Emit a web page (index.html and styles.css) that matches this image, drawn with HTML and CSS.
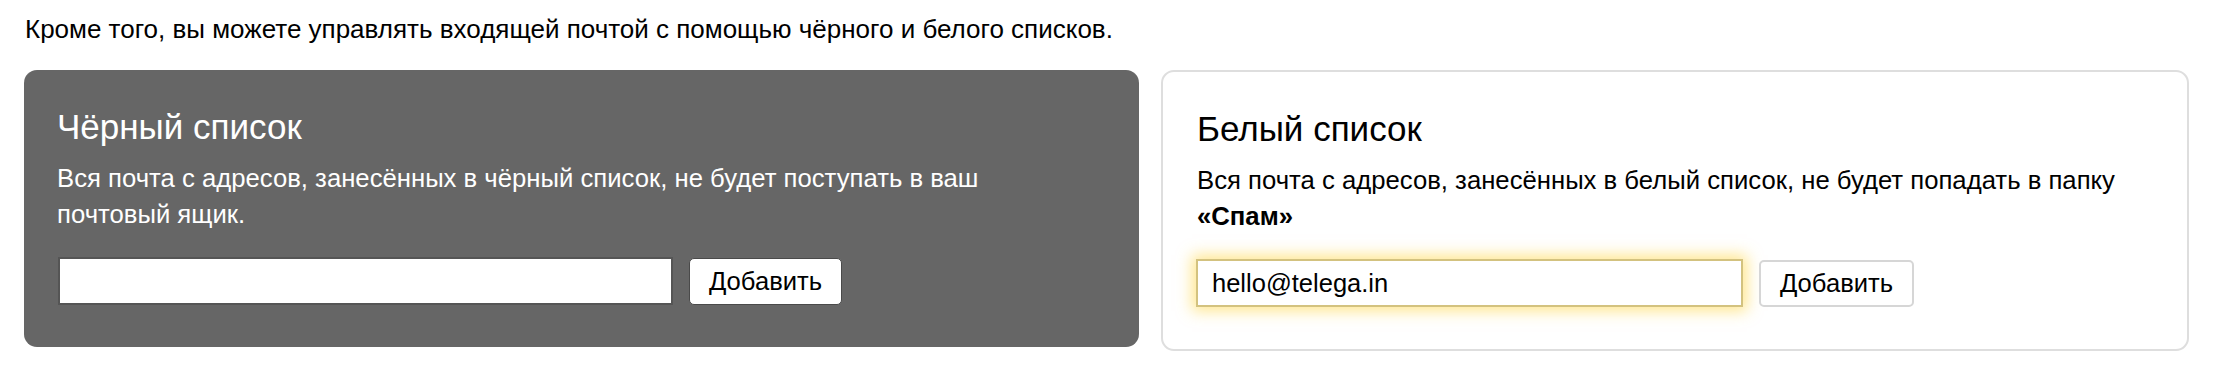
FILE: index.html
```html
<!DOCTYPE html>
<html lang="ru">
<head>
<meta charset="utf-8">
<title>Списки</title>
<link rel="stylesheet" href="styles.css">
</head>
<body>
<div class="page">
  <p class="intro">Кроме того, вы можете управлять входящей почтой с помощью чёрного и белого списков.</p>
  <div class="lists">
    <section class="card card-dark">
      <h2 class="card-title">Чёрный список</h2>
      <p class="card-desc">Вся почта с адресов, занесённых в чёрный список, не будет поступать в ваш почтовый ящик.</p>
      <form class="add-row">
        <input class="field field-dark" type="text" value="">
        <button class="btn btn-dark" type="button">Добавить</button>
      </form>
    </section>
    <section class="card card-light">
      <h2 class="card-title">Белый список</h2>
      <p class="card-desc">Вся почта с адресов, занесённых в белый список, не будет попадать в папку <b>«Спам»</b></p>
      <form class="add-row">
        <input class="field field-light" type="text" value="hello@telega.in">
        <button class="btn btn-light" type="button">Добавить</button>
      </form>
    </section>
  </div>
</div>
</body>
</html>
```

FILE: styles.css
```css
* { box-sizing: border-box; }
html, body { margin: 0; padding: 0; background: #fff; }
body {
  font-family: "Liberation Sans", Arial, Helvetica, sans-serif;
  color: #000;
}
.page {
  padding: 15px 24px 0 24px;
}
.intro {
  margin: 0 0 27px 1px;
  font-size: 26px;
  line-height: 28px;
}
.lists {
  display: grid;
  grid-template-columns: 1115px 1028px;
  column-gap: 22px;
  align-items: start;
}
.card {
  border-radius: 13px;
  padding: 37px 33px 42px 33px;
}
.card-dark {
  background: #666666;
  color: #fff;
}
.card-light {
  background: #fff;
  border: 2px solid #dedede;
  padding: 37px 34px 42px 34px;
}
.card-title {
  margin: 0 0 13px 0;
  font-size: 35px;
  line-height: 40px;
  font-weight: normal;
}
.card-desc {
  margin: 0 0 25px 0;
  font-size: 25.7px;
  line-height: 36px;
  max-width: 1000px;
}
.card-desc b { font-weight: bold; }
.add-row {
  display: flex;
  align-items: center;
  gap: 16px;
  margin: 0;
}
.field {
  height: 48px;
  margin: 0;
  padding: 0 14px;
  font-family: "Liberation Sans", Arial, sans-serif;
  font-size: 25.5px;
  color: #000;
  background: #fff;
  border-radius: 0;
  outline: none;
}
.field-dark {
  width: 615px;
  margin-left: 1px;
  border: 2px solid #555555;
}
.field-light {
  width: 547px;
  margin-left: -1px;
  border: 2px solid #d3c27f;
  box-shadow: 0 0 14px 4px rgba(255, 210, 50, 0.55);
}
.btn {
  height: 47px;
  padding: 0 19px;
  font-family: "Liberation Sans", Arial, sans-serif;
  font-size: 25.6px;
  color: #000;
  background: #fff;
  border-radius: 5px;
  cursor: pointer;
}
.btn-dark {
  border: 1px solid #4a4a4a;
}
.btn-light {
  border: 2px solid #d6d6d6;
}
```
